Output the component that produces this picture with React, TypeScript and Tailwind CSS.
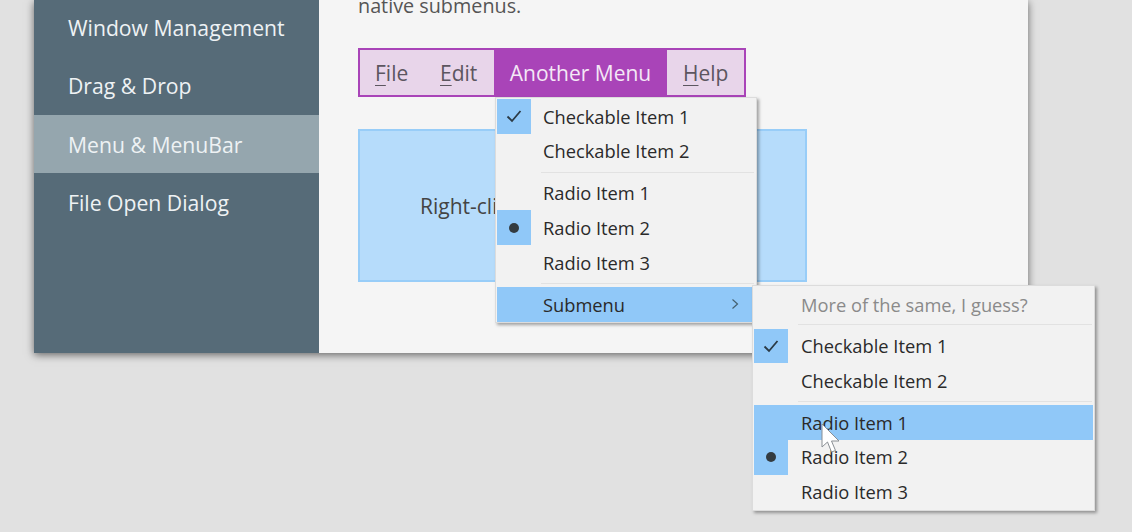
import React from 'react'

const font = { fontFamily: '"Open Sans", "Noto Sans", sans-serif' }

function Check() {
  return (
    <svg width="18" height="18" viewBox="0 0 18 18" fill="none" stroke="#2b3a45" strokeWidth="1.8">
      <path d="M2.5 9.5 L7 14 L15.5 4" />
    </svg>
  )
}

function MenuRow({ label, mark, wide, chevron, gray, sub }: { label: string; mark?: 'check' | 'dot'; wide?: boolean; chevron?: boolean; gray?: boolean; sub?: boolean }) {
  return (
    <div className={`flex h-[34.67px] items-center ${wide ? 'bg-[#90c8f8]' : ''}`}>
      <div className={`flex h-full w-[34px] shrink-0 items-center justify-center ${mark ? 'bg-[#90c8f8]' : ''}`}>
        {mark === 'check' && <Check />}
        {mark === 'dot' && <div className="h-[10px] w-[10px] rounded-full bg-[#333b40]" />}
      </div>
      <span className={`flex-1 text-[18.3px] ${sub ? 'ml-[13px]' : 'ml-[12px]'} ${gray ? 'text-[#8a8a8a]' : 'text-[#2a2a2a]'}`}>{label}</span>
      {chevron && (
        <svg className="mr-[15px]" width="10" height="12" viewBox="0 0 10 12" fill="none" stroke="#44606f" strokeWidth="1.2">
          <path d="M2.5 1.5 L7.5 6 L2.5 10.5" />
        </svg>
      )}
    </div>
  )
}

function Sep() {
  return <div className="my-[3.2px] ml-[44px] mr-px h-px bg-[#e2e2e2]" />
}

function Popup({ className, children }: { className: string; children: React.ReactNode }) {
  return (
    <div className={`absolute border border-[#dcdcdc] bg-[#f2f2f2] p-[1px] shadow-[2px_2px_3px_rgba(0,0,0,0.35)] ${className}`}>
      {children}
    </div>
  )
}

function BarItem({ first, rest, active, className }: { first?: string; rest: string; active?: boolean; className: string }) {
  return (
    <div className={`flex h-full items-center pt-[3px] text-[21px] ${active ? 'bg-[#a944b8] text-[#f4e8f6]' : 'text-[#5c5660]'} ${className}`}>
      {first && <span className="underline decoration-1 underline-offset-[4px]">{first}</span>}
      {rest}
    </div>
  )
}

export default function App() {
  const nav = ['Window Management', 'Drag & Drop', 'Menu & MenuBar', 'File Open Dialog']

  return (
    <div className="relative h-[532px] w-[1132px] overflow-hidden bg-[#e1e1e1]" style={font}>
      {/* window */}
      <div className="ml-[34px] flex h-[353px] w-[994px] shadow-[0_2px_8px_rgba(0,0,0,0.55)]">
        <aside className="w-[285px] shrink-0 bg-[#566b78] text-[21.2px] text-[#eef2f4]">
          {nav.map((n, i) => (
            <div
              key={n}
              className={`flex items-center pl-[34px] ${i === 0 ? 'h-[57px] pb-[2px]' : 'h-[58px]'} ${i === 2 ? 'bg-[#95a6ae] pt-[2px]' : ''} ${i === 3 ? 'pt-[1px]' : ''}`}
            >
              {n}
            </div>
          ))}
        </aside>

        <main className="flex-1 bg-[#f5f5f5] pl-[39px]">
          <div className="-mt-[9px] h-[57px] text-[19.8px] leading-[30px] text-[#555]">native submenus.</div>

          <div className="flex h-[49px] w-[388px] items-center border-2 border-[#a944b8] bg-[#e8d5ea]">
            <BarItem first="F" rest="ile" className="w-[66px] pl-[15px]" />
            <BarItem first="E" rest="dit" className="w-[68px] pl-[14px]" />
            <BarItem rest="Another Menu" active className="w-[173px] justify-center" />
            <BarItem first="H" rest="elp" className="pl-[16px]" />
          </div>

          <div className="mt-[32px] flex h-[153px] w-[449px] items-center border-2 border-[#98cdf8] bg-[#b6dcfb] pl-[60px] pt-[3px] text-[21px] text-[#444]">
            Right-click here for context menu
          </div>
        </main>
      </div>

      {/* open menu */}
      <Popup className="left-[495px] top-[97px] w-[262px] pb-0">
        <MenuRow label="Checkable Item 1" mark="check" />
        <MenuRow label="Checkable Item 2" />
        <Sep />
        <MenuRow label="Radio Item 1" />
        <MenuRow label="Radio Item 2" mark="dot" />
        <MenuRow label="Radio Item 3" />
        <Sep />
        <MenuRow label="Submenu" wide chevron />
      </Popup>

      {/* submenu */}
      <Popup className="left-[752px] top-[285px] w-[343px]">
        <div className="-mb-[0.5px]">
          <MenuRow label="More of the same, I guess?" gray sub />
        </div>
        <Sep />
        <MenuRow label="Checkable Item 1" mark="check" sub />
        <MenuRow label="Checkable Item 2" sub />
        <Sep />
        <MenuRow label="Radio Item 1" wide sub />
        <MenuRow label="Radio Item 2" mark="dot" sub />
        <MenuRow label="Radio Item 3" sub />
      </Popup>

      {/* mouse pointer */}
      <svg className="absolute left-[820px] top-[423px]" width="24" height="32" viewBox="0 0 24 32">
        <path d="M2 1 L2 24 L7.5 19 L11.5 29 L15.5 27.5 L11.5 18 L19 18 Z" fill="#fff" stroke="#8a8f94" strokeWidth="1" />
      </svg>
    </div>
  )
}
